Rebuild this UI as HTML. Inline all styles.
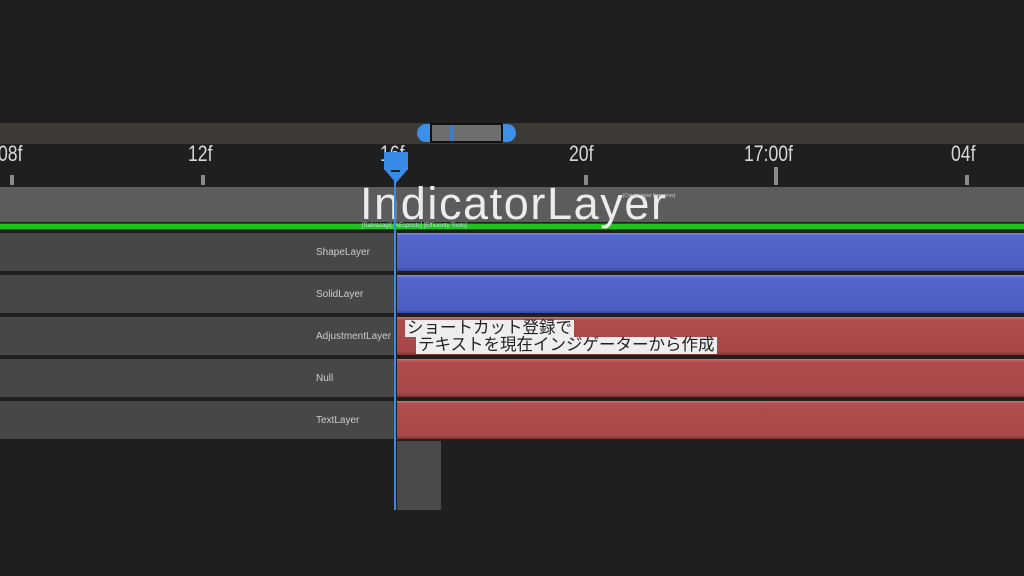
<!DOCTYPE html><html><head><meta charset="utf-8"><style>
body{margin:0;width:1024px;height:576px;background:#1f1f1f;position:relative;overflow:hidden;font-family:"Liberation Sans","Noto Sans CJK JP",sans-serif}
div{position:absolute;box-sizing:border-box}
.lbl{color:#d8d8d8;font-size:22px;top:141px;transform:scaleX(0.8);transform-origin:left top}
.tk{background:#8a8a8a;width:4px;top:175px;height:10px}
.row{left:0;width:394px;height:38px;background:#474747;color:#ccc;font-size:10px;padding-left:316px;line-height:40px}
.blue{left:397px;width:627px;height:38px;background:linear-gradient(#7a8ae0 0,#5366cc 3px,#4c5ec4 90%,#3a4aa0 100%)}
.red{left:397px;width:627px;height:38px;background:linear-gradient(#d07070 0,#b04c4c 3px,#a84848 90%,#803434 100%)}
</style></head><body>
<div style="left:0;top:123px;width:1024px;height:21px;background:#3d3a35"></div>
<div style="left:417px;top:124px;width:99px;height:18px;background:#3e8fe8;border-radius:9px"></div>
<div style="left:430px;top:123px;width:73px;height:20px;background:#6e6e6e;border:2px solid #111"></div>
<div style="left:450px;top:125px;width:3px;height:16px;background:#3a7fd0"></div>
<div class="lbl" style="left:-2px">08f</div>
<div class="lbl" style="left:188px">12f</div>
<div class="lbl" style="left:380px">16f</div>
<div class="lbl" style="left:569px">20f</div>
<div class="lbl" style="left:744px">17:00f</div>
<div class="lbl" style="left:951px">04f</div>
<div class="tk" style="left:10px"></div><div class="tk" style="left:201px"></div><div class="tk" style="left:584px"></div><div class="tk" style="left:774px;top:167px;height:18px"></div><div class="tk" style="left:965px"></div>
<div style="left:0;top:187px;width:1024px;height:35px;background:#5c5c5c"></div>
<div style="left:0;top:223px;width:1024px;height:7px;background:#1fc41f;border-top:1px solid #0a6a0a;border-bottom:1px solid #0a6a0a"></div>
<div style="left:360px;top:178px;font-size:45px;color:#ececec;letter-spacing:1.6px">IndicatorLayer</div>
<div style="left:623px;top:193px;font-size:5px;color:#ccc">[Create layer from now]</div>
<div style="left:362px;top:223px;font-size:6px;color:#cde">[Sabiasagi] [AEspricts] [Efficienty Tools]</div>
<div class="row" style="top:233px">ShapeLayer</div><div class="blue" style="top:233px"></div>
<div class="row" style="top:275px">SolidLayer</div><div class="blue" style="top:275px"></div>
<div class="row" style="top:317px">AdjustmentLayer</div><div class="red" style="top:317px"></div>
<div class="row" style="top:359px">Null</div><div class="red" style="top:359px"></div>
<div class="row" style="top:401px">TextLayer</div><div class="red" style="top:401px"></div>
<div style="left:405px;top:320px;background:#eee;color:#222;font-size:16.5px;line-height:17px;padding:0 2px">ショートカット登録で</div>
<div style="left:416px;top:337px;background:#eee;color:#222;font-size:16.5px;line-height:17px;padding:0 2px">テキストを現在インジゲーターから作成</div>
<div style="left:397px;top:441px;width:44px;height:69px;background:#4a4a4a"></div>
<div style="left:394px;top:160px;width:2px;height:350px;background:#3a8ae8"></div>
<div style="left:384px;top:152px;width:24px;height:18px;background:#3a8ae8"></div>
<div style="left:384px;top:169px;width:0;height:0;border-left:12px solid transparent;border-right:12px solid transparent;border-top:14px solid #3a8ae8"></div>
<div style="left:391px;top:170px;width:9px;height:2px;background:#222"></div>
</body></html>
